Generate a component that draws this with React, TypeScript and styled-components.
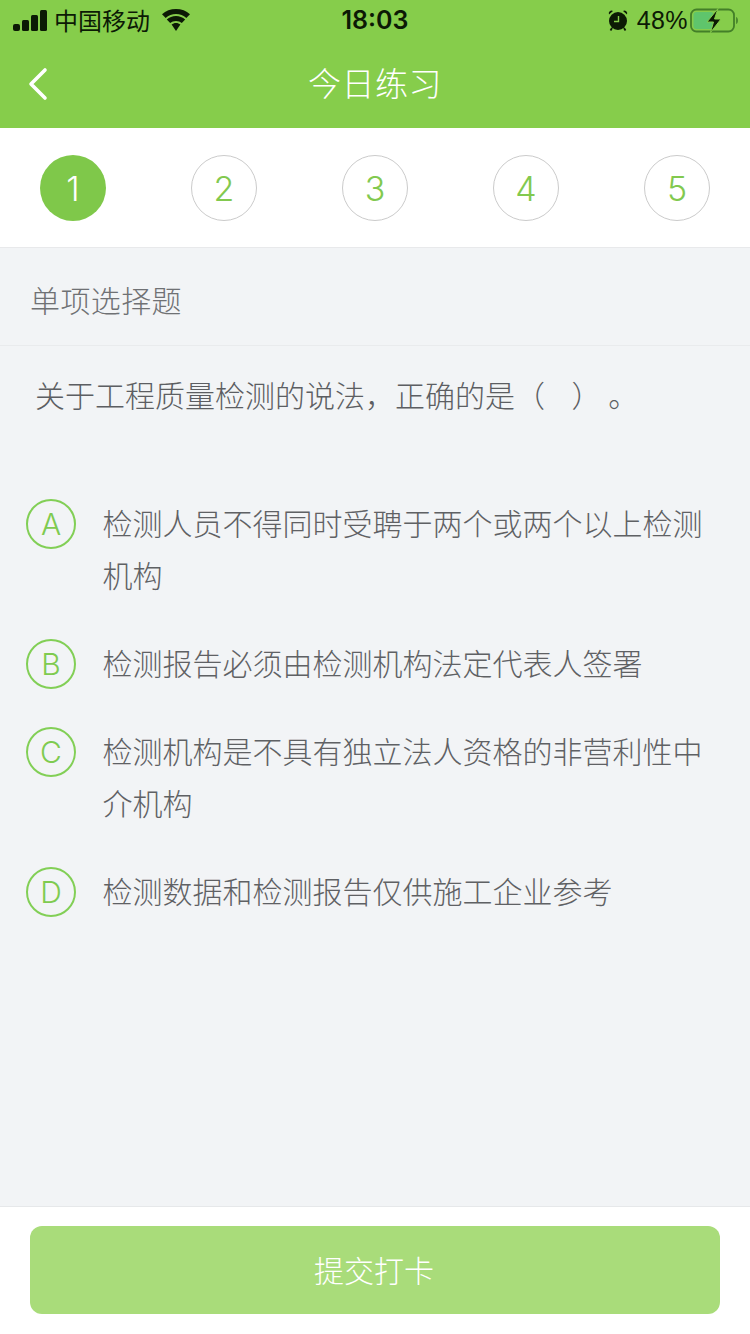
import React from "react";
import styled, { createGlobalStyle } from "styled-components";

const Global = createGlobalStyle`
  html, body { margin: 0; padding: 0; background: #f2f4f6; }
  * { box-sizing: border-box; }
  body { font-family: "Liberation Sans", "Noto Sans CJK SC", sans-serif; }
`;

const Page = styled.div`
  width: 750px;
  height: 1334px;
  display: flex;
  flex-direction: column;
  background: #f2f4f6;
  overflow: hidden;
`;

const Header = styled.header`
  background: #86cd4b;
  height: 128px;
  display: flex;
  flex-direction: column;
`;

const StatusBar = styled.div`
  height: 40px;
  display: flex;
  align-items: center;
  justify-content: space-between;
  padding: 0 11px 0 13px;
  color: #0c1a05;
`;

const StatusSide = styled.div`
  width: 260px;
  display: flex;
  align-items: center;
  justify-content: ${(p: { $end?: boolean }) => (p.$end ? "flex-end" : "flex-start")};
`;

const Carrier = styled.span`
  font-size: 24px;
  margin-left: 7px;
  margin-right: 11px;
  font-family: "Noto Sans CJK SC", sans-serif;
  font-weight: 400;
  line-height: 40px;
`;

const Clock = styled.span`
  font-size: 25px;
  font-weight: 600;
  font-family: "Inter", "Liberation Sans", sans-serif;
  margin-right: 2px;
`;

const Percent = styled.span`
  font-size: 25px;
  font-family: "Liberation Sans", sans-serif;
  margin: 0 2px 0 8px;
  letter-spacing: 0.4px;
`;

const NavBar = styled.nav`
  position: relative;
  flex: 1;
  display: flex;
  align-items: center;
  justify-content: center;
  padding-bottom: 4px;
`;

const BackButton = styled.button`
  position: absolute;
  left: 27px;
  top: 27px;
  width: 22px;
  height: 34px;
  padding: 0;
  border: 0;
  background: none;
  display: block;
`;

const Title = styled.h1`
  margin: 0;
  font-family: "Noto Sans CJK SC", sans-serif;
  font-size: 33px;
  font-weight: 300;
  color: #fff;
  letter-spacing: 0.5px;
`;

const Steps = styled.div`
  height: 120px;
  background: #fff;
  border-bottom: 1px solid #e8e9eb;
  padding: 27px 40px 0;
  display: flex;
  justify-content: space-between;
  align-items: flex-start;
`;

const Step = styled.div<{ $active?: boolean }>`
  width: 66px;
  height: 66px;
  border-radius: 50%;
  display: flex;
  align-items: center;
  justify-content: center;
  font-size: 34px;
  font-weight: 300;
  font-family: "Inter", "Liberation Sans", sans-serif;
  background: ${(p) => (p.$active ? "#7fc84a" : "#fff")};
  color: ${(p) => (p.$active ? "#fff" : "#82c94f")};
  border: ${(p) => (p.$active ? "none" : "1px solid #cbcbcb")};
`;

const Section = styled.div`
  height: 98px;
  padding: 4px 30px 0;
  display: flex;
  align-items: center;
  border-bottom: 1px solid #e9ebed;
  font-family: "Noto Sans CJK SC", sans-serif;
  font-size: 30px;
  letter-spacing: 0.4px;
  font-weight: 300;
  color: #6f7174;
`;

const Question = styled.p`
  margin: 0;
  padding: 23px 0 0 35px;
  height: 127px;
  font-family: "Noto Sans CJK SC", sans-serif;
  font-size: 30px;
  line-height: 50px;
  font-weight: 300;
  color: #5c5e62;
  text-spacing-trim: space-all;
`;

const Options = styled.div`
  display: flex;
  flex-direction: column;
  gap: 36px;
  padding: 0 46px 0 26px;
  margin-top: 23px;
  flex: 1;
`;

const Option = styled.div`
  display: flex;
  align-items: flex-start;
  gap: 26.500px;
`;

const Letter = styled.div`
  width: 50px;
  height: 50px;
  margin: 3px 0 -1px;
  flex: none;
  border-radius: 50%;
  border: 2px solid #82cf56;
  color: #7fcb50;
  font-size: 30px;
  font-weight: 300;
  font-family: "Inter", "Liberation Sans", sans-serif;
  display: flex;
  align-items: center;
  justify-content: center;
`;

const OptionText = styled.div`
  font-family: "Noto Sans CJK SC", sans-serif;
  font-size: 30px;
  line-height: 52px;
  font-weight: 300;
  color: #5f6164;
`;

const Footer = styled.footer`
  height: 128px;
  background: #fff;
  border-top: 1px solid #e6e8ea;
  padding: 19px 30px 0;
`;

const Submit = styled.button`
  width: 690px;
  height: 88px;
  padding: 0 2px 2px 0;
  border: 0;
  border-radius: 12px;
  background: #a9dc7a;
  color: #fff;
  font-family: "Noto Sans CJK SC", sans-serif;
  font-size: 30px;
  font-weight: 300;
`;

const options = [
  ["A", "检测人员不得同时受聘于两个或两个以上检测机构"],
  ["B", "检测报告必须由检测机构法定代表人签署"],
  ["C", "检测机构是不具有独立法人资格的非营利性中介机构"],
  ["D", "检测数据和检测报告仅供施工企业参考"],
];

const Signal = () => (
  <svg width="34" height="21" viewBox="0 0 34 21" fill="#0c1a05">
    <rect x="0" y="14" width="7" height="7" rx="2" />
    <rect x="9" y="10" width="7" height="11" rx="1.500" />
    <rect x="18" y="5" width="7" height="16" rx="1.500" />
    <rect x="27" y="0" width="7" height="21" rx="1.500" />
  </svg>
);

const Wifi = () => (
  <svg width="30" height="22" viewBox="0 0 30 22" fill="#0c1a05">
    <path d="M15 5c4 0 7.500 1.500 10.300 4L29 5.200C25.300 1.900 20.400 0 15 0S4.700 1.900 1 5.200L4.700 9C7.500 6.500 11 5 15 5z" />
    <path d="M15 12c2.200 0 4.300.800 5.800 2.100l3.400-3.600C21.700 8.300 18.500 7 15 7s-6.700 1.300-9.200 3.500l3.400 3.600C10.700 12.800 12.800 12 15 12z" />
    <path d="M15 14c-1.700 0-3.200.6-4.400 1.600L15 22l4.400-6.400C18.200 14.600 16.700 14 15 14z" />
  </svg>
);

const Alarm = () => (
  <svg width="22" height="24" viewBox="0 0 22 24">
    <circle cx="11" cy="13" r="9" fill="#0c1a05" />
    <path d="M11.500 8v5.500H7" fill="none" stroke="#86cd4b" strokeWidth="1.400" />
    <path d="M2 6.500 6 3A2.800 2.800 0 0 0 2 6.500zM20 6.500 16 3A2.800 2.800 0 0 1 20 6.500z" fill="#0c1a05" />
    <path d="M5 20 3.500 22.500M17 20l1.500 2.500" stroke="#0c1a05" strokeWidth="1.800" />
  </svg>
);

const Battery = () => (
  <svg width="49" height="25" viewBox="0 0 49 25">
    <rect x="1" y="1.500" width="43" height="22" rx="5.500" fill="none" stroke="#437f28" strokeWidth="1.800" />
    <rect x="3.500" y="4" width="20" height="17" rx="3" fill="#5fc56c" />
    <path d="M46 9c1.600.5 2 2 2 3.500s-.4 3-2 3.500z" fill="#4c8a2e" />
    <path d="M28 0.500 17 14h6.500L20.500 24.500 31 11h-6.500z" fill="#0c1a05" stroke="#86cd4b" strokeWidth="1" />
  </svg>
);

export default function App() {
  return (
    <Page>
      <Global />
      <Header>
        <StatusBar>
          <StatusSide>
            <Signal />
            <Carrier>中国移动</Carrier>
            <Wifi />
          </StatusSide>
          <Clock>18:03</Clock>
          <StatusSide $end>
            <Alarm />
            <Percent>48%</Percent>
            <Battery />
          </StatusSide>
        </StatusBar>
        <NavBar>
          <BackButton aria-label="返回">
            <svg width="22" height="34" viewBox="0 0 22 34" fill="none">
              <path d="M18 3 4 17l14 14" stroke="#fff" strokeWidth="3.600" strokeLinecap="round" strokeLinejoin="round" />
            </svg>
          </BackButton>
          <Title>今日练习</Title>
        </NavBar>
      </Header>
      <Steps>
        {[1, 2, 3, 4, 5].map((n) => (
          <Step key={n} $active={n === 1}>{n}</Step>
        ))}
      </Steps>
      <Section>单项选择题</Section>
      <Question>关于工程质量检测的说法，正确的是（&nbsp;&nbsp;&nbsp;&nbsp;）&nbsp;。</Question>
      <Options>
        {options.map(([l, t]) => (
          <Option key={l}>
            <Letter>{l}</Letter>
            <OptionText>{t}</OptionText>
          </Option>
        ))}
      </Options>
      <Footer>
        <Submit>提交打卡</Submit>
      </Footer>
    </Page>
  );
}
